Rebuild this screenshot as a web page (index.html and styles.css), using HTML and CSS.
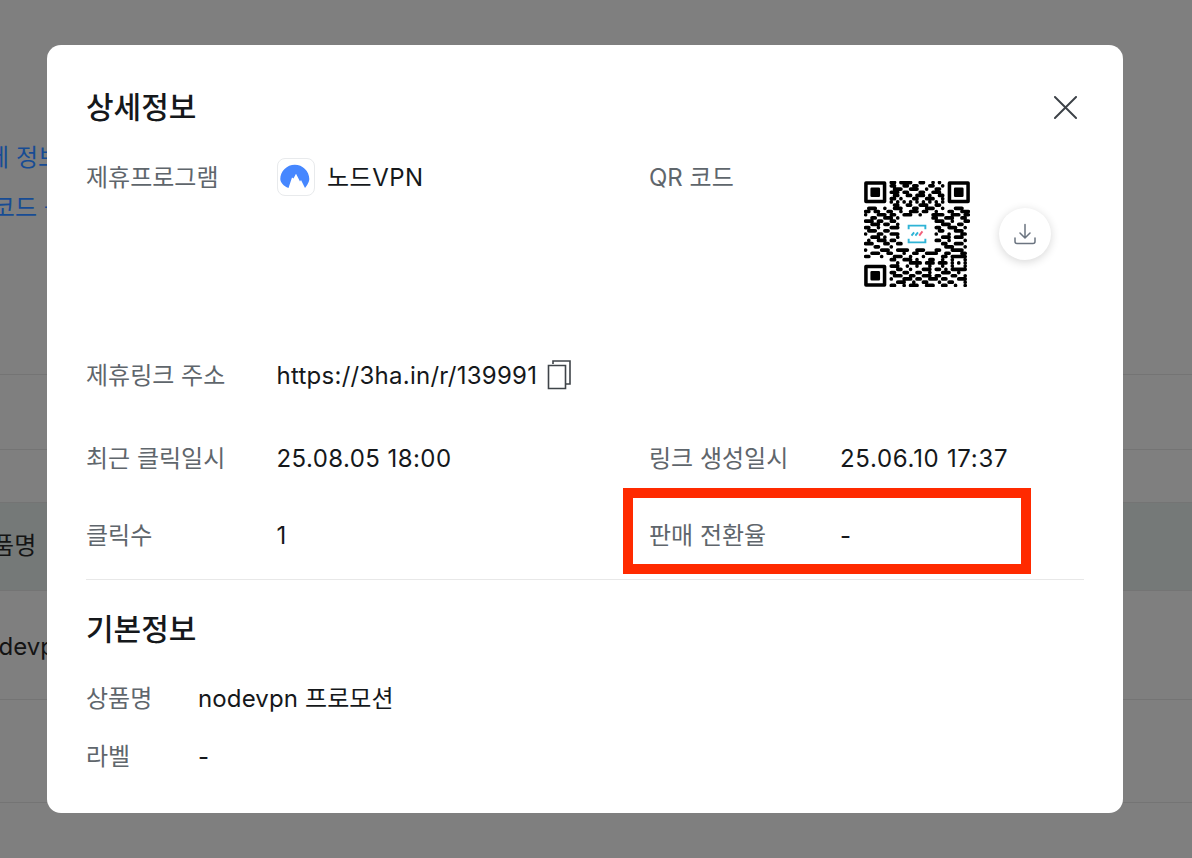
FILE: index.html
```html
<!DOCTYPE html>
<html lang="ko">
<head>
<meta charset="utf-8">
<title>상세정보</title>
<link rel="stylesheet" href="styles.css">
</head>
<body>
<main class="page">
  <div class="intro">
    <a class="page-link link-detail">상세 정보 보기</a>
    <a class="page-link">QR코드 공유</a>
  </div>
  <div class="page-row row-a"></div>
  <div class="page-row row-b"></div>
  <div class="page-row row-head"><span class="page-text">상품명</span></div>
  <div class="page-row row-body"><span class="page-text">nodevpn</span></div>
  <div class="page-row row-c"></div>
</main>

<div class="modal">
  <header class="modal-head">
    <h2 class="title">상세정보</h2>
    <button class="close" aria-label="닫기">
      <svg class="close-icon" viewBox="0 0 24 24"><path d="M1 1l22 22M23 1L1 23"/></svg>
    </button>
  </header>

  <div class="row row-program">
    <span class="label">제휴프로그램</span>
    <div class="value program">
      <span class="logo">
        <svg viewBox="0 0 36 36" class="logo-icon"><path d="M10.500 29C5.500 27 2.300 23.500 2.300 20C2.300 12 9 5.700 16.800 5.700C24.600 5.700 31.300 12 31.300 20C31.300 23.500 28.500 27 27 29L23 21 22 22.500 18 14.700 15.500 19.500 14 18.500Z"/></svg>
      </span>
      <span class="program-name">노드VPN</span>
    </div>
    <span class="label">QR 코드</span>
    <div class="qr-wrap">
      <svg class="qr" viewBox="0 0 33 33">
        <path class="qr-dots" d="M8.500 .5h1M11.500 .5h3M17.500 .5h1M21.500 .5h0M23.500 .5h0M8.500 1.500h1M12.500 1.500h1M15.500 1.500h1M20.500 1.500h1M24.500 1.500h0M9.500 2.500h2M14.500 2.500h2M19.500 2.500h0M22.500 2.500h1M8.500 3.500h2M12.500 3.500h1M17.500 3.500h1M21.500 3.500h2M9.500 4.500h1M13.500 4.500h1M16.500 4.500h2M20.500 4.500h0M23.500 4.500h1M8.500 5.500h1M11.500 5.500h0M15.500 5.500h1M19.500 5.500h2M24.500 5.500h0M8.500 6.500h0M10.500 6.500h0M12.500 6.500h0M14.500 6.500h0M16.500 6.500h0M18.500 6.500h0M20.500 6.500h0M22.500 6.500h0M24.500 6.500h0M9.500 7.500h1M13.500 7.500h1M17.500 7.500h2M22.500 7.500h1M1.500 8.500h2M6.500 8.500h0M9.500 8.500h2M15.500 8.500h1M19.500 8.500h2M24.500 8.500h0M28.500 8.500h2M.5 9.500h1M3.500 9.500h1M7.500 9.500h1M11.500 9.500h0M14.500 9.500h2M18.500 9.500h1M22.500 9.500h0M26.500 9.500h1M30.500 9.500h2M.5 10.500h0M4.500 10.500h2M8.500 10.500h1M12.500 10.500h2M17.500 10.500h0M21.500 10.500h3M27.500 10.500h2M31.500 10.500h1M2.500 11.500h1M6.500 11.500h2M10.500 11.500h0M21.500 11.500h1M25.500 11.500h2M30.500 11.500h1M.5 12.500h2M4.500 12.500h1M8.500 12.500h1M22.500 12.500h2M27.500 12.500h0M31.500 12.500h1M2.500 13.500h2M6.500 13.500h1M10.500 13.500h0M24.500 13.500h2M29.500 13.500h1M.5 14.500h1M4.500 14.500h0M8.500 14.500h2M22.500 14.500h1M26.500 14.500h2M31.500 14.500h0M1.500 15.500h2M6.500 15.500h1M23.500 15.500h1M28.500 15.500h2M.5 16.500h0M4.500 16.500h1M8.500 16.500h2M22.500 16.500h0M26.500 16.500h0M30.500 16.500h1M2.500 17.500h2M6.500 17.500h0M10.500 17.500h0M24.500 17.500h2M28.500 17.500h2M1.500 18.500h0M4.500 18.500h2M8.500 18.500h1M22.500 18.500h1M26.500 18.500h0M31.500 18.500h0M.5 19.500h2M6.500 19.500h1M10.500 19.500h1M24.500 19.500h1M28.500 19.500h2M3.500 20.500h1M8.500 20.500h0M25.500 20.500h2M31.500 20.500h0M.5 21.500h0M5.500 21.500h2M10.500 21.500h3M16.500 21.500h2M22.500 21.500h1M27.500 21.500h3M2.500 22.500h2M7.500 22.500h1M12.500 22.500h0M15.500 22.500h1M19.500 22.500h3M25.500 22.500h1M30.500 22.500h1M.5 23.500h1M5.500 23.500h0M9.500 23.500h2M14.500 23.500h0M18.500 23.500h0M24.500 23.500h1M27.500 23.500h4M8.500 24.500h1M12.500 24.500h2M16.500 24.500h0M20.500 24.500h1M24.500 24.500h0M27.500 24.500h0M31.500 24.500h0M10.500 25.500h0M14.500 25.500h3M19.500 25.500h2M23.500 25.500h2M27.500 25.500h0M29.500 25.500h0M31.500 25.500h0M8.500 26.500h2M13.500 26.500h0M16.500 26.500h0M20.500 26.500h0M24.500 26.500h0M27.500 26.500h0M31.500 26.500h0M10.500 27.500h1M14.500 27.500h0M18.500 27.500h2M22.500 27.500h1M25.500 27.500h0M27.500 27.500h4M8.500 28.500h1M12.500 28.500h1M16.500 28.500h1M20.500 28.500h0M24.500 28.500h2M29.500 28.500h0M9.500 29.500h2M14.500 29.500h1M18.500 29.500h2M22.500 29.500h1M27.500 29.500h1M31.500 29.500h0M8.500 30.500h0M12.500 30.500h2M16.500 30.500h1M20.500 30.500h2M24.500 30.500h1M29.500 30.500h2M10.500 31.500h2M15.500 31.500h0M18.500 31.500h1M23.500 31.500h0M26.500 31.500h1M31.500 31.500h0M8.500 32.500h1M12.500 32.500h0M14.500 32.500h2M19.500 32.500h2M24.500 32.500h1M28.500 32.500h0M31.500 32.500h0"/>
        <path class="qr-finder" d="M.6.6h5.800v5.800H.6zM26.600.6h5.800v5.800h-5.800zM.6 26.600h5.800v5.800H.6z"/>
        <path class="qr-eye" d="M2.400 2.400h2.200v2.200H2.400zM28.400 2.400h2.200v2.200h-2.200zM2.400 28.400h2.200v2.200H2.400z"/>
        <path class="qr-mark" d="M13.900 15v-1.100h5.200V15M13.900 18v1.100h5.200V18"/>
        <path class="qr-slash-a" d="M14.800 17l.8-1M16 17l.8-1"/>
        <path class="qr-slash-b" d="M17.200 17l1-1.300"/>
      </svg>
      <button class="download" aria-label="다운로드">
        <svg class="download-icon" viewBox="0 0 24 24"><path d="M12 2.500v13M7 11l5 5 5-5M2 16v3.500a2 2 0 0 0 2 2h16a2 2 0 0 0 2-2V16"/></svg>
      </button>
    </div>
  </div>

  <div class="row row-link">
    <span class="label">제휴링크 주소</span>
    <div class="value link-value">
      <span>https://3ha.in/r/139991</span>
      <svg class="copy-icon" viewBox="0 0 24 30"><path d="M6 4V1h17v23h-4"/><path d="M1.500 5.500h17v23h-17z"/></svg>
    </div>
  </div>

  <div class="row row-date">
    <span class="label">최근 클릭일시</span>
    <span class="value date-clicked">25.08.05 18:00</span>
    <span class="label">링크 생성일시</span>
    <span class="value date-created">25.06.10 17:37</span>
  </div>

  <div class="row row-count">
    <span class="label">클릭수</span>
    <span class="value">1</span>
    <div class="highlighted">
      <span class="label">판매 전환율</span>
      <span class="value">-</span>
    </div>
  </div>

  <hr class="divider">

  <h2 class="title section-title">기본정보</h2>
  <div class="basic-row first">
    <span class="label">상품명</span>
    <span class="value">nodevpn 프로모션</span>
  </div>
  <div class="basic-row">
    <span class="label">라벨</span>
    <span class="value">-</span>
  </div>
</div>
</body>
</html>
```

FILE: styles.css
```css
*, *::before, *::after { box-sizing: border-box; }

html, body {
  margin: 0;
  height: 100%;
  overflow: hidden;
}

body {
  background: #808080;
  font-family: Inter, "Noto Sans CJK KR", sans-serif;
  color: #111417;
}

/* page behind the dimmed overlay */
.page {
  height: 858px;
  display: flex;
  flex-direction: column;
  background: #7f7f7f;
}

.intro {
  height: 375px;
  padding-top: 139px;
  display: flex;
  flex-direction: column;
  gap: 12px;
  border-bottom: 1px solid #747474;
  margin-left: -41px;
}

.page-link {
  font-size: 24px;
  line-height: 38px;
  color: #174c94;
  white-space: nowrap;
}

.link-detail { margin-left: 6px; }

.page-row { border-bottom: 1px solid #747474; flex: none; }
.row-a { height: 75px; }
.row-b { height: 53px; }

.row-head {
  height: 88px;
  background: #757978;
  display: flex;
  align-items: center;
  justify-content: flex-start;
  overflow: hidden;
}

.row-body {
  height: 109px;
  display: flex;
  align-items: center;
  overflow: hidden;
}

.row-c { height: 103px; }

.page-text {
  font-size: 24px;
  color: #141414;
  margin-left: -30px;
  margin-top: -6px;
  white-space: nowrap;
}

.row-body .page-text { margin-left: -30px; margin-top: 2px; }

/* modal */
.modal {
  position: absolute;
  left: 47px;
  top: 45px;
  width: 1076px;
  height: 768px;
  padding: 0 39px;
  background: #fff;
  border-radius: 14px;
}

.modal-head {
  height: 117px;
  display: flex;
  justify-content: space-between;
  align-items: center;
  padding-top: 7px;
}

.title {
  margin: 0;
  font-size: 30px;
  line-height: 40px;
  font-weight: 500;
  color: #15181b;
}

.close {
  border: 0;
  padding: 0;
  margin-right: 7px;
  background: none;
  width: 23px;
  height: 24px;
}

.close-icon {
  display: block;
  width: 23px;
  height: 23px;
  fill: none;
  stroke: #3c4147;
  stroke-width: 2;
  stroke-linecap: round;
}

.row {
  display: grid;
  grid-template-columns: 190.5px 372.5px 191px 1fr;
}

.label {
  font-size: 24px;
  line-height: 32px;
  color: #5f666c;
  white-space: nowrap;
}

.value {
  font-size: 24px;
  line-height: 32px;
  color: #15181b;
  white-space: nowrap;
  letter-spacing: .13px;
}

.program-name { letter-spacing: .5px; }
.date-clicked { letter-spacing: .43px; }
.date-created { letter-spacing: .7px; }

.row-program { height: 198px; }

.program {
  display: flex;
  align-items: center;
  gap: 12px;
  height: 32px;
}

.logo {
  width: 38px;
  height: 38px;
  flex: none;
  border: 1px solid #e8eaec;
  border-radius: 8px;
  overflow: hidden;
  margin: -8px 0 -6px .5px;
}

.logo-icon {
  display: block;
  width: 36px;
  height: 36px;
  fill: #4687ff;
}

.qr-wrap {
  position: relative;
  padding: 19px 0 0 24px;
}

.qr {
  display: block;
  width: 106px;
  height: 106px;
}

.qr-dots {
  fill: none;
  stroke: #000;
  stroke-width: 1.15;
  stroke-linecap: round;
}

.qr-finder {
  fill: none;
  stroke: #000;
  stroke-width: 1.1;
  stroke-linejoin: round;
}

.qr-eye {
  fill: #000;
  stroke: #000;
  stroke-width: .8;
  stroke-linejoin: round;
}

.qr-mark {
  fill: none;
  stroke: #2fb4d6;
  stroke-width: .6;
}

.qr-slash-a {
  fill: none;
  stroke: #2fb4d6;
  stroke-width: .6;
}

.qr-slash-b {
  fill: none;
  stroke: #f2607a;
  stroke-width: .6;
}

.download {
  position: absolute;
  left: 159px;
  top: 46px;
  width: 52px;
  height: 52px;
  padding: 0;
  border: 0;
  border-radius: 50%;
  background: #fff;
  box-shadow: 0 2px 10px rgba(0, 0, 0, .16);
  display: flex;
  align-items: center;
  justify-content: center;
}

.download-icon {
  width: 24px;
  height: 24px;
  fill: none;
  stroke: #6b7480;
  stroke-width: 1.5;
  stroke-linecap: round;
  stroke-linejoin: round;
}

.row-link { height: 32px; }

.link-value {
  grid-column: 2 / 5;
  display: flex;
  align-items: center;
  gap: 10px;
  letter-spacing: .26px;
}

.copy-icon {
  width: 24px;
  height: 30px;
  fill: none;
  stroke: #3f4449;
  stroke-width: 1.6;
  margin-top: -2px;
}

.row-date { margin-top: 51px; }
.row-count { margin-top: 45px; }

.highlighted {
  grid-column: 3 / 5;
  display: grid;
  grid-template-columns: 191px 1fr;
  position: relative;
}

.highlighted::after {
  content: "";
  position: absolute;
  left: -26px;
  top: -32px;
  width: 408px;
  height: 86px;
  border: 10px solid #ff2a00;
}

.divider {
  margin: 27px 0 0;
  border: 0;
  border-top: 1px solid #e8e8e8;
}

.section-title { margin-top: 29px; }

.basic-row {
  display: grid;
  grid-template-columns: 112px 1fr;
  margin-top: 26px;
}

.basic-row.first { margin-top: 34px; }
```
